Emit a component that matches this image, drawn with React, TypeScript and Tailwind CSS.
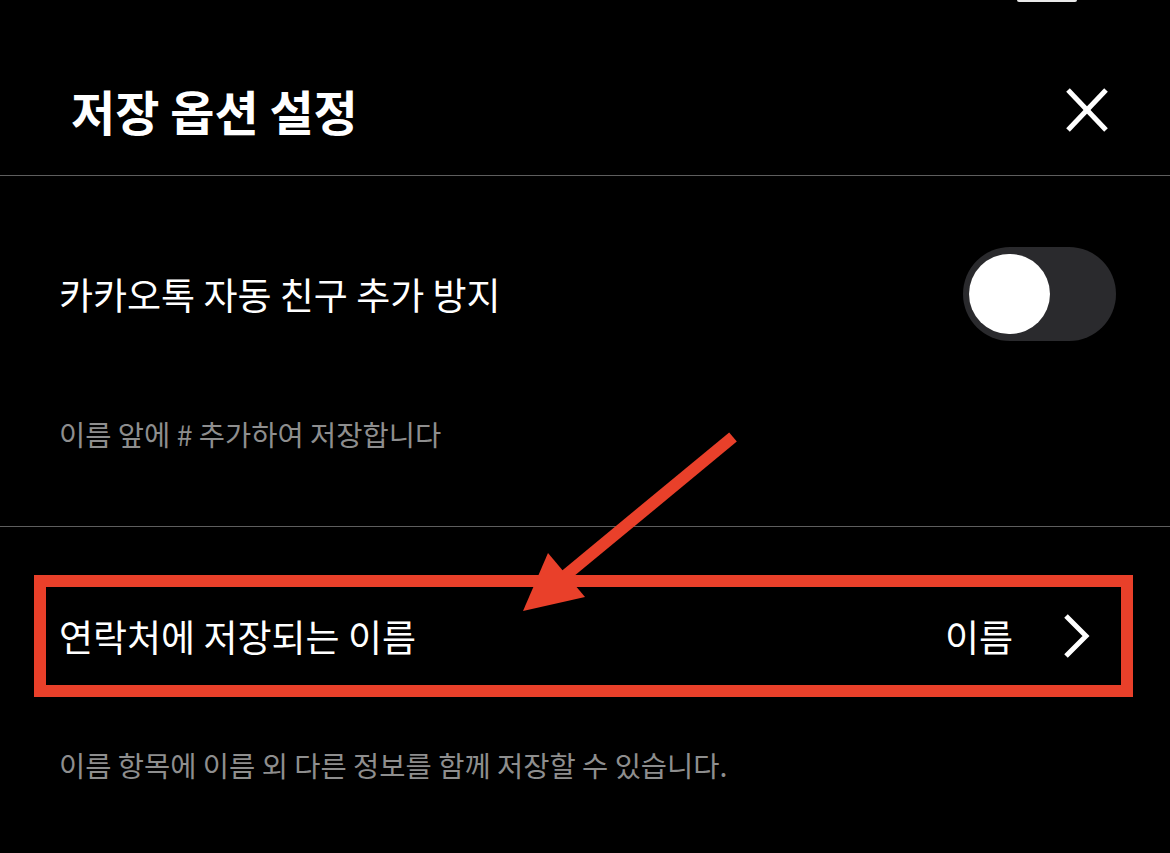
import React from "react";

const font = { fontFamily: '"Noto Sans CJK KR", "Noto Sans", sans-serif' };

function Toggle() {
  return (
    <div className="relative w-[153px] h-[94px] rounded-full bg-[#2a2a2d] shrink-0">
      <div className="absolute left-[6px] top-[7px] w-[81px] h-[80px] rounded-full bg-white" />
    </div>
  );
}

export default function App() {
  return (
    <div className="relative w-[1170px] h-[853px] bg-black overflow-hidden text-white" style={font}>
      {/* status indicator remnant */}
      <div className="absolute left-[1017px] top-0 w-[60px] h-[2px] rounded-b bg-[#e8e8e8]" />

      {/* header */}
      <div className="flex items-center justify-between h-[175px] pt-[44px] pl-[71px] pr-[62px]">
        <h1 className="text-[48px] font-bold leading-none">저장 옵션 설정</h1>
        <svg width="42" height="44" viewBox="0 0 42 44" className="block">
          <line x1="2" y1="2" x2="40" y2="42" stroke="white" strokeWidth="5" />
          <line x1="40" y1="2" x2="2" y2="42" stroke="white" strokeWidth="5" />
        </svg>
      </div>
      <div className="h-px bg-[#5e5e5e]" />

      {/* section 1 */}
      <div className="flex flex-col">
        <div className="flex items-center justify-between h-[236px] pl-[59px] pr-[54px]">
          <span className="text-[37px] leading-none">카카오톡 자동 친구 추가 방지</span>
          <Toggle />
        </div>
        <div className="h-[114px] pl-[59px] pt-[2px]">
          <span className="text-[28.5px] leading-[40px] text-[#8e8e8e]">이름 앞에 # 추가하여 저장합니다</span>
        </div>
      </div>
      <div className="h-px bg-[#5e5e5e]" />

      {/* section 2 */}
      <div className="flex flex-col">
        <div className="flex items-center justify-between h-[218px] pl-[59px] pr-[80px]">
          <span className="text-[37px] leading-none">연락처에 저장되는 이름</span>
          <div className="flex items-center gap-[51px]">
            <span className="text-[37px] leading-none">이름</span>
            <svg width="26" height="44" viewBox="0 0 26 44" className="block">
              <polyline points="2,2 22,22 2,42" fill="none" stroke="white" strokeWidth="5" />
            </svg>
          </div>
        </div>
        <div className="pl-[59px]">
          <span className="text-[28.5px] leading-[40px] text-[#8e8e8e]">
            이름 항목에 이름 외 다른 정보를 함께 저장할 수 있습니다.
          </span>
        </div>
      </div>

      {/* annotation: red box */}
      <div className="absolute left-[34px] top-[575px] w-[1099px] h-[122px] border-[12px] border-[#e9402a]" />

      {/* annotation: arrow */}
      <svg className="absolute left-0 top-0" width="1170" height="853" viewBox="0 0 1170 853">
        <line x1="733" y1="437" x2="560" y2="580" stroke="#e9402a" strokeWidth="12" />
        <polygon points="523,611 548,553 585,597" fill="#e9402a" />
      </svg>
    </div>
  );
}
